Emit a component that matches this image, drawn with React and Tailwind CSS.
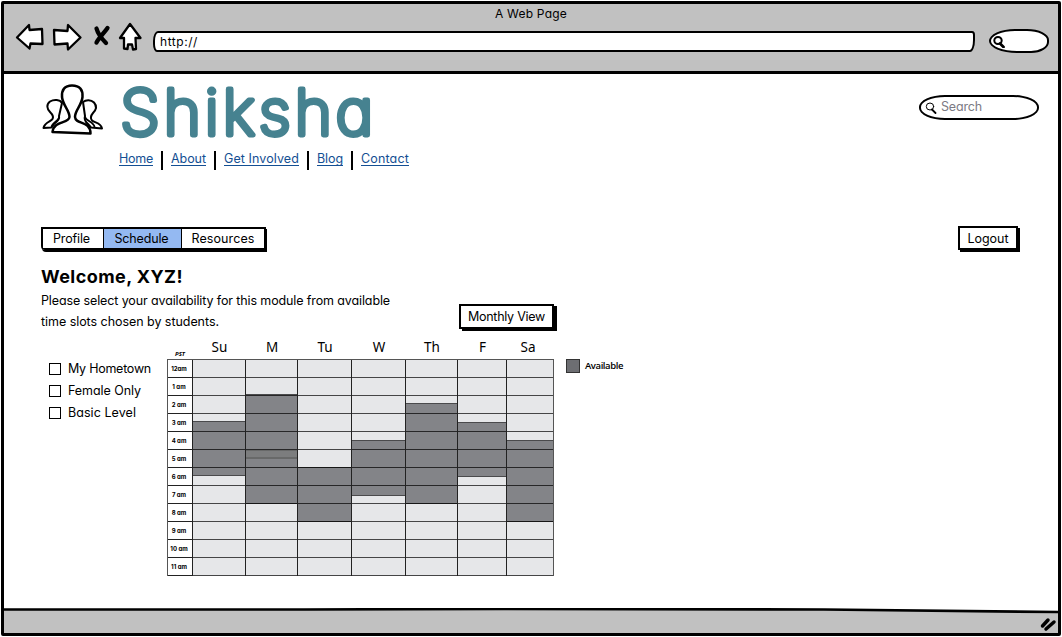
import { useLayoutEffect, useRef, useState } from "react";

// Text whose letter spacing is adjusted so that the line fills a given width.
function Fit({ w, className = "", children }) {
  const ref = useRef(null);
  const [spacing, setSpacing] = useState(0);
  useLayoutEffect(() => {
    const natural = ref.current.getBoundingClientRect().width;
    setSpacing((w - natural) / String(children).length);
  }, [w, children]);
  return (
    <span ref={ref} className={`inline-block whitespace-pre ${className}`} style={{ letterSpacing: spacing }}>
      {children}
    </span>
  );
}

const ink = { fill: "white", stroke: "black", strokeWidth: 2.3, strokeLinejoin: "round", strokeLinecap: "round" };

function BrowserIcons() {
  return (
    <svg className="-mt-px mb-px h-8 w-[130px] shrink-0" viewBox="14 20 130 32" {...ink}>
      <path d="M17 37.500 29 25 29.500 30 42 29 42.500 44 30.500 43.500 29.500 48.500Z" />
      <path d="M80.500 37.500 68 25 67.500 31 54 30 54.500 44.500 67.500 43.500 68 49.500Z" />
      <path d="M96.500 28.500C98 34 103 40 106 43M107.500 28C104 33 99 38 96.500 42.500" strokeWidth="4.300" />
      <path d="M130 24 120 38 124 38 124 48.500 127.500 49 128 44.500 132 44.500 133 49.500 136 49 135.500 38 140.500 38Z" />
    </svg>
  );
}

function UsersIcon() {
  return (
    <svg className="h-[54px] w-16 shrink-0" viewBox="41 82 64 54" {...ink}>
      <path d="M62 103C60 99.500 54 99 50 101.500C46 104.500 47 109 50 112C52.500 114.500 54 116.500 52.500 119C51 121.500 44.500 122 43.500 128L51.500 127.500L54 124C57 121.500 60 119.500 59 116Z" strokeWidth="2" />
      <path d="M59 118C58 121 52 122.500 51.500 127" fill="none" strokeWidth="1.800" />
      <path d="M83 102C86 99.500 91 99.500 94 102.500C97.500 106.500 96 110 93 113C90.500 116 90 118 92 120.500C95 123 101 122.500 102 128.500L91 127.500L88 124C85 121.500 84 119 85 116Z" strokeWidth="2" />
      <path d="M85 117C86 121 94 122 94.500 127" fill="none" strokeWidth="1.800" />
      <path d="M72 85.500C64.500 85.500 61.500 90 62 97C63 106 69.500 110 69.500 117C69 124 54 120 52.500 132L90.500 133.500C90.500 120 75.500 125 75 117C75 110 81.500 106 82.500 97C83 90 80 85.500 72 85.500Z" strokeWidth="2.500" />
    </svg>
  );
}

function Magnifier({ className, strokeWidth }) {
  return (
    <svg className={className} viewBox="0 0 12 12" fill="none" stroke="black" strokeWidth={strokeWidth} strokeLinecap="round">
      <ellipse cx="5" cy="4.500" rx="3.700" ry="3.500" />
      <path d="M7 7.500 10.500 11" strokeWidth={strokeWidth + 0.8} />
    </svg>
  );
}

function Wordmark() {
  return (
    <svg className="ml-[14px] h-[77px] w-[270px] overflow-visible" viewBox="0 -4 270 77" role="heading" aria-level="1">
      <text
        x="1" y="56.500" textLength="257" lengthAdjust="spacingAndGlyphs" letterSpacing="3.500" fontSize="63" fill="#468290" stroke="#468290"
        strokeWidth="4.800" strokeLinejoin="round" strokeLinecap="round" className="font-extralight"
      >
        Shiksha
      </text>
    </svg>
  );
}

const links = [["Home", 34], ["About", 35], ["Get Involved", 75], ["Blog", 26], ["Contact", 48]];

function Nav() {
  return (
    <nav className="flex items-start text-[12.5px] leading-4 text-[#144f93]">
      {links.map(([name, w], i) => (
        <div key={name} className="flex">
          {i > 0 && <div className="ml-2 mr-2 h-[19px] w-[2px] bg-black" />}
          <a className="h-[15px] border-b border-[#144f93]"><Fit w={w}>{name}</Fit></a>
        </div>
      ))}
    </nav>
  );
}

function Button({ children, w, className = "" }) {
  return (
    <button className={`flex shrink-0 items-center justify-center border-2 border-black bg-white pt-[2px] text-[12.5px] ${className}`}>
      <Fit w={w}>{children}</Fit>
    </button>
  );
}

const hours = ["12am", "1 am", "2 am", "3 am", "4 am", "5 am", "6 am", "7 am", "8 am", "9 am", "10 am", "11 am"];
const days = [
  { name: "Su", col: "w-[53px]", top: 61, height: 55 },
  { name: "M", col: "w-[52px]", top: 34, height: 110, extra: true },
  { name: "Tu", col: "w-[54px]", top: 107, height: 55 },
  { name: "W", col: "w-[54px]", top: 80, height: 56 },
  { name: "Th", col: "w-[52px]", top: 43, height: 101 },
  { name: "F", col: "w-[49px]", top: 62, height: 55 },
  { name: "Sa", col: "w-[47px]", top: 80, height: 82 },
];

function Schedule() {
  return (
    <div className="-mt-px w-[387px]">
      <div className="flex h-[19px] items-start font-['Noto_Sans',sans-serif] text-[13.5px] leading-[14px]">
        <div className="w-[26px] pl-2 pt-[7px] text-[6px] font-bold italic">PST</div>
        {days.map((d) => (
          <div key={d.name} className={`${d.col} ${d.name === "Sa" ? "pr-[5px]" : ""} text-center`}>{d.name}</div>
        ))}
      </div>
      <div className="flex border-r border-t border-[#555]">
        <div className="w-[25px] border-l border-[#555]">
          {hours.map((h) => (
            <div key={h} className="flex h-[18px] items-center justify-center border-b border-[#222] pr-[2px] text-[6px] font-bold leading-none">
              {h}
            </div>
          ))}
        </div>
        {days.map((d) => (
          <div key={d.name} className={`relative border-l border-[#222] bg-[#e6e7e9] ${d.col}`}>
            <div className="absolute inset-x-0 border-y border-[#4a4a4c] bg-[#838488]" style={{ top: d.top, height: d.height }}>
              {d.extra && <div className="mt-[55px] h-[9px] border-b-2 border-t border-[#686969] bg-[#7c7d7e]" />}
            </div>
            {hours.map((h) => (
              <div key={h} className="relative h-[18px] border-b border-black/70" />
            ))}
          </div>
        ))}
      </div>
    </div>
  );
}

export default function App() {
  return (
    <div className="h-[637px] w-[1062px] bg-white p-px font-[Inter,sans-serif] text-black [font-feature-settings:'cv11']">
      <div className="flex h-full flex-col rounded-[2px] border-[3px] border-black">
        <header className="h-[70px] shrink-0 border-b-[3px] border-black bg-[#c1c1c1]">
          <div className="h-[17px] pt-[2px] text-center text-[12px] leading-4"><Fit w={72}>A Web Page</Fit></div>
          <div className="-mt-px flex items-center pl-[10px]">
            <BrowserIcons />
            <div className="ml-[9px] mt-[10px] flex h-[21px] w-[822px] items-center rounded-[5px_3px_5px_4px/10px_4px_12px_8px] border-[2.500px] border-black bg-white pl-[5px] text-[12px]">
              <Fit w={38}>http://</Fit>
            </div>
            <div className="ml-[14px] mt-[9px] flex h-[24px] w-[60px] items-center rounded-[26px_22px_18px_28px/12px_11px_11px_12px] border-[2.500px] border-black bg-white pl-[2px]">
              <Magnifier className="mt-[2px] h-3 w-3" strokeWidth={2} />
            </div>
          </div>
        </header>

        <main className="flex-1 pl-[37px]">
          <div className="flex h-[77px] items-start">
            <div className="pt-2"><UsersIcon /></div>
            <Wordmark />
            <div className="ml-auto mr-[19px] mt-[21px] flex h-[25px] w-[120px] items-center rounded-[26px/12px] border-2 border-black bg-white pl-1 text-[12.5px] text-[#7c7a84]">
              <Magnifier className="mr-1 h-3 w-3" strokeWidth={1} />
              <Fit w={41}>Search</Fit>
            </div>
          </div>
          <div className="h-[75px] pl-[78px]"><Nav /></div>

          <div className="flex h-[38px] items-start justify-between pr-[40px]">
            <div className="mt-px flex h-[23px] rounded-bl-[4px] border-2 border-black text-[12.500px] shadow-[1px_2px_0_black]">
              <div className="flex w-[60px] items-center justify-center bg-white pr-[3px] pt-px"><Fit w={37}>Profile</Fit></div>
              <div className="flex w-[79px] items-center justify-center border-x border-black bg-[#94b9f2] pr-[2px] pt-px"><Fit w={54}>Schedule</Fit></div>
              <div className="flex w-[82px] items-center justify-center bg-white pt-px"><Fit w={63}>Resources</Fit></div>
            </div>
            <Button w={41} className="h-[24px] w-[60px] shadow-[2px_2px_0_black]">Logout</Button>
          </div>

          <div className="flex h-[77px]">
            <div className="w-[418px]">
              <h2 className="h-[26px] pt-px text-[18px] font-bold leading-6"><Fit w={142}>Welcome, XYZ!</Fit></h2>
              <div className="text-[12.500px] leading-[21px]">
                <Fit w={349}>Please select your availability for this module from available</Fit>
                <Fit w={178}>time slots chosen by students.</Fit>
              </div>
            </div>
            <Button w={77} className="mt-[40px] h-[25px] w-[95px] shadow-[3px_2px_0_black]">Monthly View</Button>
          </div>

          <div className="flex items-start">
            <div className="flex w-[126px] flex-col pl-2 pt-[17px]">
              {[["My Hometown", 83], ["Female Only", 73], ["Basic Level", 68]].map(([label, w]) => (
                <label key={label} className="flex h-[22px] items-center text-[12.500px]">
                  <span className="mr-[7px] h-3 w-3 border-[1.500px] border-black bg-white" />
                  <Fit w={w}>{label}</Fit>
                </label>
              ))}
            </div>
            <Schedule />
            <div className="ml-[12px] mt-[18px] flex items-center font-['Open_Sans',sans-serif] text-[9.500px] font-semibold leading-[14px]">
              <span className="mr-[5px] h-[14px] w-[14px] border border-[#333] bg-[#6d6e72]" />
              <Fit w={38}>Available</Fit>
            </div>
          </div>
        </main>

        <footer className="h-[25px] shrink-0">
          <svg className="block h-full w-full" viewBox="0 0 1054 25">
            <path d="M0 1.500 300 1.500 820 1.500 1054 4V25H0Z" fill="#c1c1c1" />
            <path d="M0 1.500H300L500 1 820 1.500 1054 4" fill="none" stroke="black" strokeWidth="2.700" />
            <path d="M1038.500 18 1044 12M1042 21 1050 14" stroke="black" strokeWidth="3.500" strokeLinecap="round" />
          </svg>
        </footer>
      </div>
    </div>
  );
}
